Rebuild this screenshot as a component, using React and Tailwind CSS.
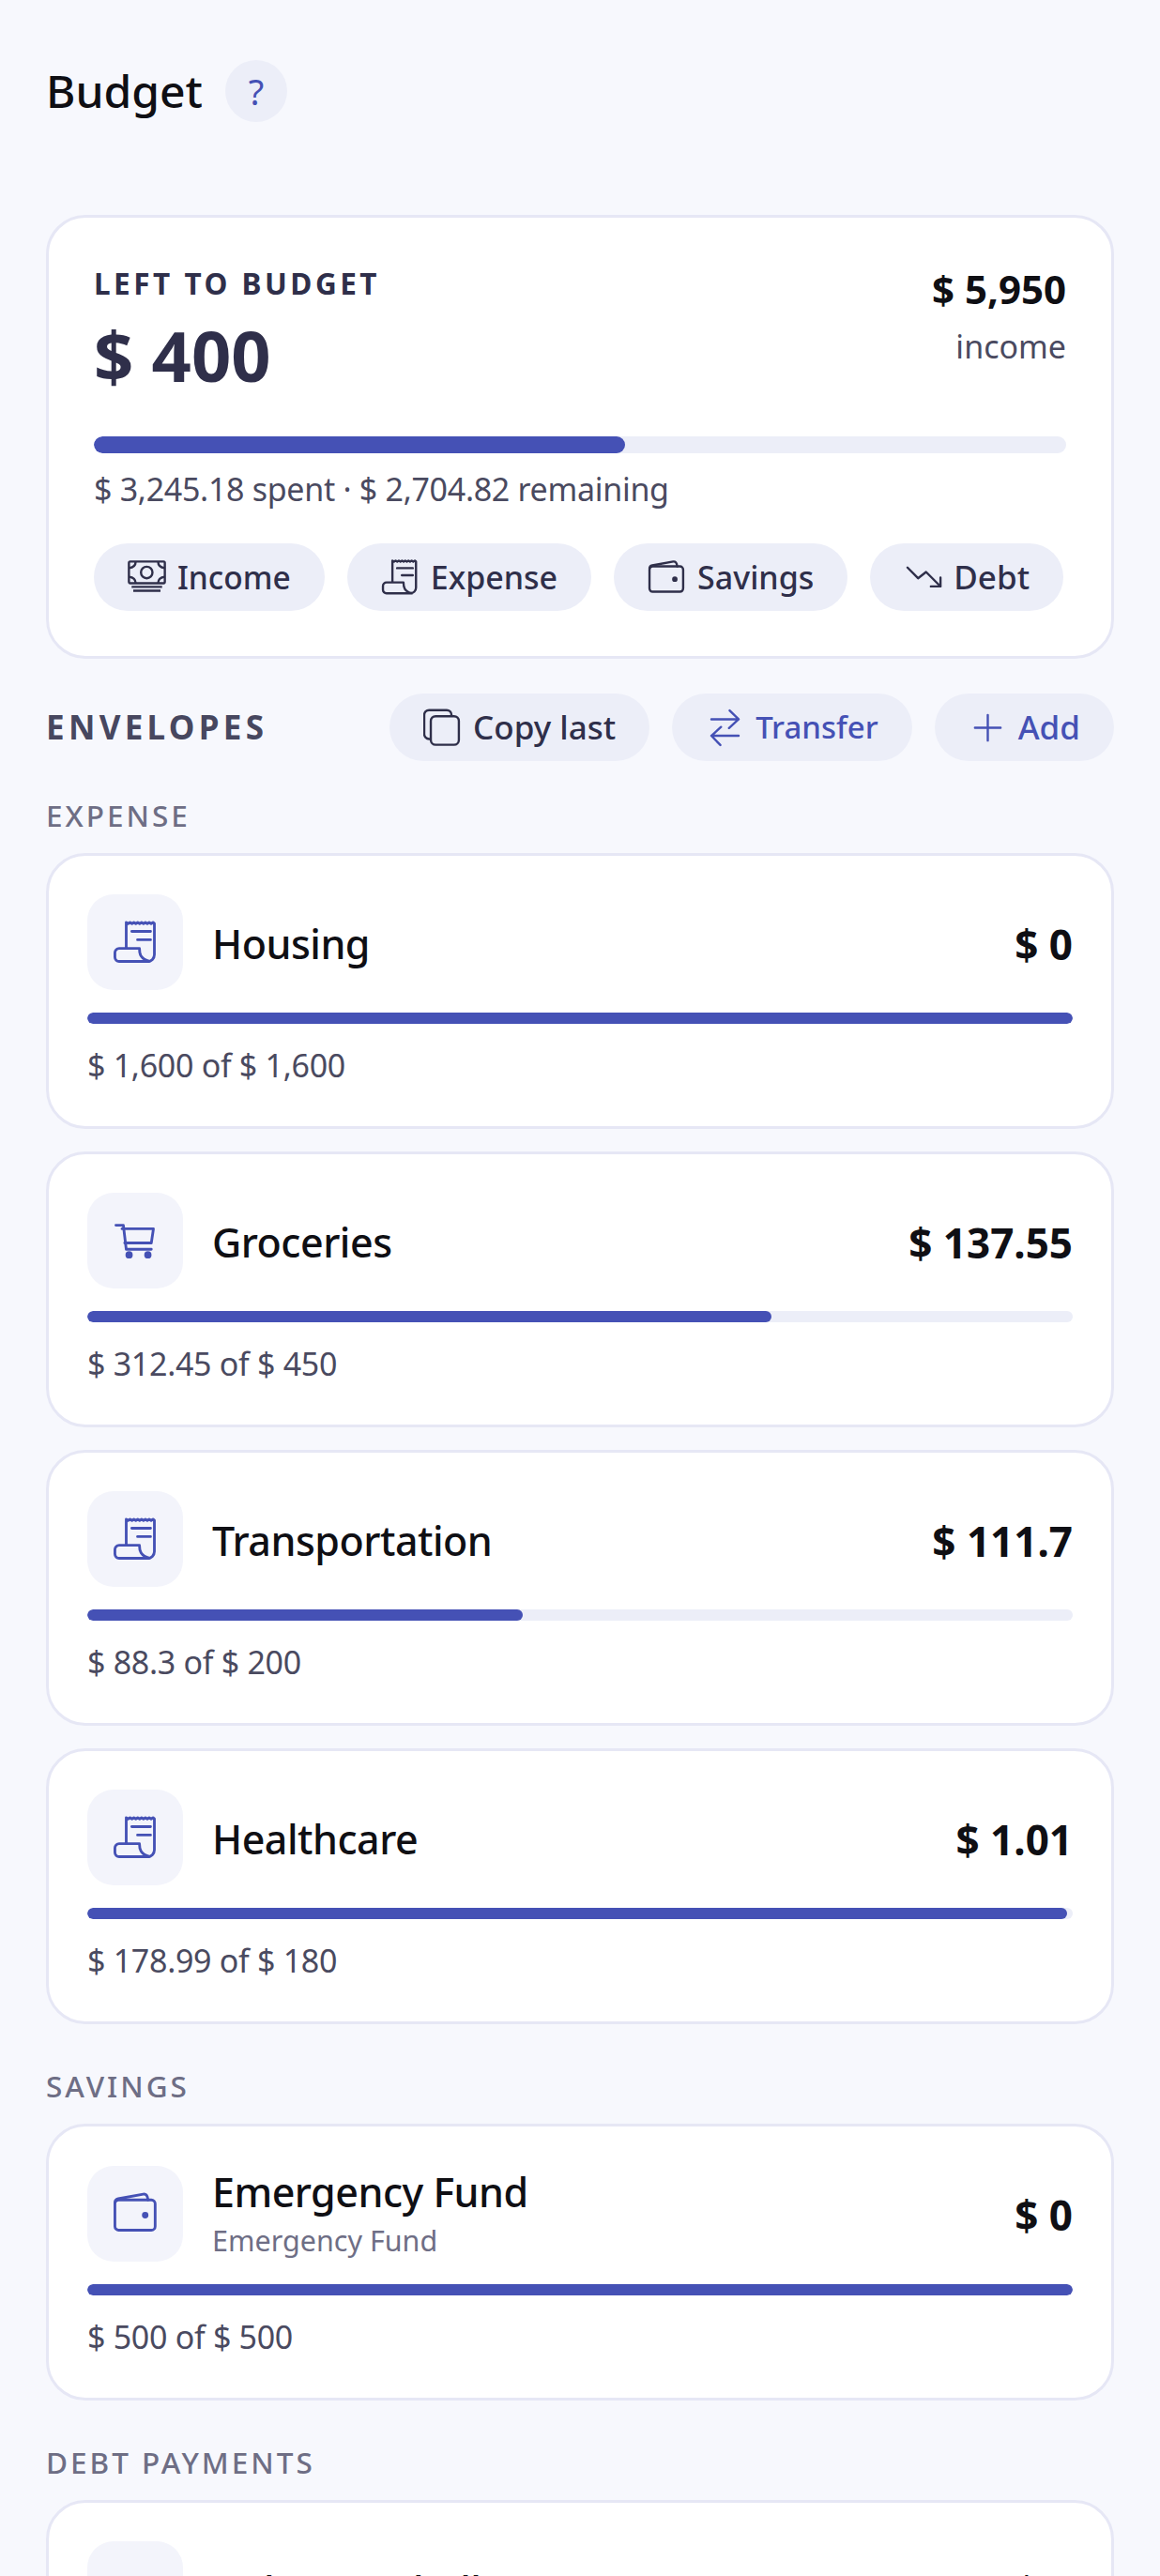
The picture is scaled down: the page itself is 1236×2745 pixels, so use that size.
import React from "react";

const FONT = "font-['Noto_Sans',sans-serif]";

const ReceiptIcon = ({ className }) => (
  <svg className={className} viewBox="0 0 24 24" fill="none" stroke="currentColor" strokeWidth="1.4" strokeLinecap="round" strokeLinejoin="round">
    <path d="M7.1 15V1.4l1 .7 1-.7 1 .7 1-.7 1 .7 1-.7 1 .7 1-.7 1 .7 1-.7 1 .7 1-.7 1 .7 1-.7.7.6V18.3a3.5 3.5 0 0 1-3.5 3.5H3.4a2.2 2.2 0 0 1-2.2-2.2v-2.4A2.2 2.2 0 0 1 3.4 15H14c0 3 .5 5.5 5.3 6.8" />
    <path d="M10 6.1h9.8M13 10.5h6.8" />
  </svg>
);

const CartIcon = ({ className }) => (
  <svg className={className} viewBox="0 0 24 24" fill="none" stroke="currentColor" strokeWidth="1.4" strokeLinecap="round" strokeLinejoin="round">
    <path d="M1.7 3.7h3.9l1.5 12.6h13.1" />
    <path d="M4.9 5.6h16.4L20.2 13H6.3" />
    <circle cx="8.6" cy="19.2" r="1.2" fill="currentColor" />
    <circle cx="18.4" cy="19.2" r="1.2" fill="currentColor" />
  </svg>
);

const WalletIcon = ({ className }) => (
  <svg className={className} viewBox="0 0 24 24" fill="none" stroke="currentColor" strokeWidth="1.4" strokeLinecap="round" strokeLinejoin="round">
    <rect x="1.2" y="5" width="21" height="15.8" rx="2" />
    <path d="M1.2 6.5c0-1 .7-1.9 1.7-2.1L16 2c1.3-.2 2.2.5 2.5 3" />
    <circle cx="17" cy="13" r="1" fill="currentColor" />
  </svg>
);

const BanknoteIcon = ({ className }) => (
  <svg className={className} viewBox="0 0 24 24" fill="none" stroke="currentColor" strokeWidth="1.4" strokeLinejoin="round">
    <rect x="0.8" y="2" width="22.4" height="13.5" rx="0.8" />
    <circle cx="11.9" cy="8.8" r="3.6" />
    <path d="M5 2Q5 5.5.8 6M19 2q0 3.5 4.2 4M5 15.5Q5 12 .8 11.5M19 15.5q0-3.500 4.200-4" />
    <path d="M2.5 17.8h19M3.5 20.2h17" />
  </svg>
);

const TrendDownIcon = ({ className }) => (
  <svg className={className} viewBox="0 0 24 24" fill="none" stroke="currentColor" strokeWidth="1.4" strokeLinecap="round" strokeLinejoin="round">
    <path d="M2.3 5.7l6.6 6.7 5-3.9 8.9 8.9" />
    <path d="M22.9 12v5.5h-6" />
  </svg>
);

const CopyIcon = ({ className }) => (
  <svg className={className} viewBox="0 0 24 24" fill="none" stroke="currentColor" strokeWidth="1.4" strokeLinejoin="round">
    <rect x="4.7" y="4.8" width="17.5" height="17.8" rx="3" />
    <path d="M17.6 4.8V4a3 3 0 0 0-3-3H3.6a3 3 0 0 0-3 3v12a3 3 0 0 0 3 3h1.1" />
  </svg>
);

const TransferIcon = ({ className }) => (
  <svg className={className} viewBox="0 0 24 24" fill="none" stroke="currentColor" strokeWidth="1.4" strokeLinecap="round" strokeLinejoin="round">
    <path d="M3.5 6.7h17l-5.6-5.5M20.5 6.7l-6 5.5" />
    <path d="M20.5 17h-17l5.600 5.800M3.500 17l6-5.500" />
  </svg>
);

const PlusIcon = ({ className }) => (
  <svg className={className} viewBox="0 0 24 24" fill="none" stroke="currentColor" strokeWidth="1.4" strokeLinecap="round">
    <path d="M12 4v16M4 12h16" />
  </svg>
);

function Pill({ icon: Icon, label, blue, size = "text-[34px]" }) {
  return (
    <button className={`flex h-[72px] items-center gap-[12px] rounded-full bg-[#eceef8] px-9 font-medium ${size} ${blue ? "text-[#4551b5]" : "text-[#2f2f4a]"}`}>
      <Icon className="h-[41px] w-[41px]" />
      <span>{label}</span>
    </button>
  );
}

function Bar({ pct, height }) {
  return (
    <div className={`w-full overflow-hidden rounded-full bg-[#eceef8] ${height}`}>
      <div className="h-full rounded-full bg-[#4551b5]" style={{ width: `${pct}%` }} />
    </div>
  );
}

function EnvelopeCard({ icon: Icon, name, sub, amount, spent, pct }) {
  return (
    <div className="rounded-[42px] border-[3px] border-[#e6e7f5] bg-white px-[41px] pt-[41px] pb-[43px]">
      <div className="flex items-center gap-[31px]">
        <div className="flex h-[102px] w-[102px] shrink-0 items-center justify-center rounded-[28px] bg-[#f3f4fb] text-[#4551b5]">
          <Icon className="h-[49px] w-[49px]" />
        </div>
        <div className="min-w-0 flex-1">
          <div className={`text-[43px] leading-[58px] font-medium tracking-[-0.5px] text-[#0f0f14] ${sub ? "" : "pt-[4px]"}`}>{name}</div>
          {sub && <div className="text-[30.5px] leading-[45px] text-[#6e6e85]">{sub}</div>}
        </div>
        <div className="pt-[3px] text-[44px] font-bold text-[#0f0f14]">{amount}</div>
      </div>
      <div className="mt-[24px]">
        <Bar pct={pct} height="h-[12px]" />
      </div>
      <div className="mt-[22px] text-[34px] leading-[44px] tracking-[-0.3px] text-[#4a4a60]">{spent}</div>
    </div>
  );
}

function SectionLabel({ children, className }) {
  return (
    <div className={`text-[31.5px] leading-[40px] font-medium tracking-[3px] text-[#6e6e85] ${className}`}>{children}</div>
  );
}

export default function App() {
  return (
    <div className={`h-screen overflow-hidden bg-[#f7f8fd] px-[49px] ${FONT}`}>
      {/* Header */}
      <div className="flex h-[229px] items-center gap-[24px] pt-[64px] pb-[99px]">
        <h1 className="text-[48px] font-medium text-[#0f0f14]">Budget</h1>
        <button className="flex h-[66px] w-[66px] items-center justify-center rounded-full bg-[#eceef8] text-[38px] text-[#4551b5]">?</button>
      </div>

      {/* Summary */}
      <div className="rounded-[42px] border-[3px] border-[#e6e7f5] bg-white px-[48px] pt-[51px] pb-[48px]">
        <div className="flex items-start justify-between">
          <div>
            <div className="text-[31.5px] leading-[38px] font-bold tracking-[3.5px] text-[#2f2f4a]">LEFT TO BUDGET</div>
            <div className="mt-[12px] text-[74px] leading-[92px] font-bold text-[#2f2f4a]">$ 400</div>
          </div>
          <div className="text-right">
            <div className="text-[42px] leading-[50px] font-bold text-[#0f0f14]">$ 5,950</div>
            <div className="mt-[14px] text-[34px] leading-[44px] text-[#4a4a60]">income</div>
          </div>
        </div>
        <div className="mt-[40px]">
          <Bar pct={54.6} height="h-[18px]" />
        </div>
        <div className="mt-[16px] text-[34px] leading-[44px] tracking-[-0.3px] text-[#4a4a60]">$ 3,245.18 spent · $ 2,704.82 remaining</div>
        <div className="mt-[36px] flex gap-[24px]">
          <Pill icon={BanknoteIcon} label="Income" size="text-[33.5px]" />
          <Pill icon={ReceiptIcon} label="Expense" />
          <Pill icon={WalletIcon} label="Savings" />
          <Pill icon={TrendDownIcon} label="Debt" size="text-[35px]" />
        </div>
      </div>

      {/* Envelopes */}
      <div className="mt-[37px] flex items-center justify-between">
        <h2 className="text-[35px] font-bold tracking-[4.3px] text-[#47475f]">ENVELOPES</h2>
        <div className="flex gap-[24px]">
          <Pill icon={CopyIcon} label="Copy last" size="text-[35px]" />
          <Pill icon={TransferIcon} label="Transfer" blue size="text-[33px]" />
          <Pill icon={PlusIcon} label="Add" blue size="text-[35px]" />
        </div>
      </div>

      <SectionLabel className="mt-[38px] mb-[20px]">EXPENSE</SectionLabel>
      <div className="flex flex-col gap-[24px]">
        <EnvelopeCard icon={ReceiptIcon} name="Housing" amount="$ 0" spent="$ 1,600 of $ 1,600" pct={100} />
        <EnvelopeCard icon={CartIcon} name="Groceries" amount="$ 137.55" spent="$ 312.45 of $ 450" pct={69.4} />
        <EnvelopeCard icon={ReceiptIcon} name="Transportation" amount="$ 111.7" spent="$ 88.3 of $ 200" pct={44.2} />
        <EnvelopeCard icon={ReceiptIcon} name="Healthcare" amount="$ 1.01" spent="$ 178.99 of $ 180" pct={99.4} />
      </div>

      <SectionLabel className="mt-[46px] mb-[20px]">SAVINGS</SectionLabel>
      <EnvelopeCard icon={WalletIcon} name="Emergency Fund" sub="Emergency Fund" amount="$ 0" spent="$ 500 of $ 500" pct={100} />

      <SectionLabel className="mt-[46px] mb-[20px]">DEBT PAYMENTS</SectionLabel>
      <EnvelopeCard icon={TrendDownIcon} name="Debt snowball" amount="$ 0" pct={0} />
    </div>
  );
}
